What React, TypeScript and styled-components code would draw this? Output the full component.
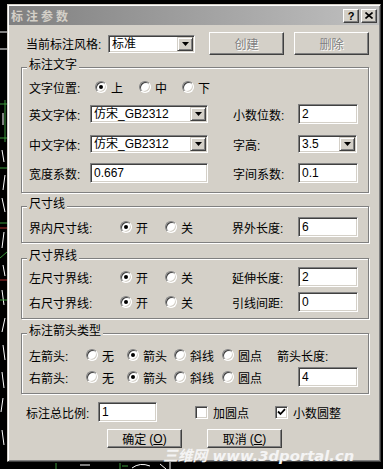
import React from "react";
import styled, { createGlobalStyle } from "styled-components";

const Global = createGlobalStyle`
  html, body { margin: 0; padding: 0; background: #000; }
  body {
    width: 383px; height: 469px; overflow: hidden;
    font-family: "Liberation Sans", "Noto Sans CJK SC", sans-serif;
    font-size: 12px; color: #000;
  }
  * { box-sizing: border-box; }
`;

const Screen = styled.div`
  position: relative;
  width: 383px;
  height: 469px;
  padding: 4px 2px 0 7px;
  background: #000;
`;

const Backdrop = styled.svg`
  position: absolute;
  left: 0; top: 0;
  width: 383px; height: 469px;
  z-index: 0;
`;

const Dialog = styled.div`
  position: relative;
  z-index: 1;
  width: 374px;
  height: 458px;
  background: #d4d0c8;
  border: 1px solid;
  border-color: #d4d0c8 #404040 #404040 #d4d0c8;
  box-shadow: inset 1px 1px #fff, inset -1px -1px #808080;
  padding: 1px;
  display: flex;
  flex-direction: column;
`;

const TitleBar = styled.div`
  height: 19px;
  display: flex;
  align-items: center;
  padding: 0 2px 0 2px;
  background: linear-gradient(to right, #808080, #c0c0c0);
`;

const TitleText = styled.span`
  flex: 1;
  font-family: "Noto Sans CJK SC", sans-serif;
  font-weight: 700;
  font-size: 12px;
  letter-spacing: 3px;
  color: #d4d0c8;
  line-height: 19px;
`;

const CaptionButton = styled.span<{ $ml: number }>`
  width: 16px;
  height: 14px;
  margin-left: ${(p) => p.$ml}px;
  background: #d4d0c8;
  border: 1px solid;
  border-color: #fff #404040 #404040 #fff;
  box-shadow: inset -1px -1px #808080;
  display: flex;
  align-items: center;
  justify-content: center;
  font-family: "Liberation Sans", sans-serif;
  font-weight: 700;
  font-size: 11px;
  line-height: 12px;
`;

const Body = styled.div`
  flex: 1;
  display: flex;
  flex-direction: column;
  padding: 0 10px 0 12px;
`;

const TopRow = styled.div`
  margin-top: 7px;
  height: 23px;
  display: flex;
  align-items: center;
  padding-left: 5px;
`;

const Label = styled.span<{ $w?: number }>`
  white-space: nowrap;
  ${(p) => (p.$w ? `width: ${p.$w}px; flex: none;` : "")}
`;

const Sunken = styled.div<{ $w?: number; $h: number }>`
  width: ${(p) => (p.$w ? `${p.$w}px` : "100%")};
  height: ${(p) => p.$h}px;
  flex: none;
  background: #fff;
  border: 1px solid;
  border-color: #808080 #fff #fff #808080;
  box-shadow: inset 1px 1px #404040, inset -1px -1px #d4d0c8;
  display: flex;
  align-items: center;
  padding: 0 2px 0 3px;
  white-space: nowrap;
  overflow: hidden;
`;

const FieldText = styled.span`
  flex: 1;
  line-height: 14px;
`;

const DropButton = styled.span`
  width: 16px;
  height: 14px;
  flex: none;
  margin-right: -1px;
  background: #d4d0c8;
  border: 1px solid;
  border-color: #d4d0c8 #404040 #404040 #d4d0c8;
  box-shadow: inset 1px 1px #fff, inset -1px -1px #808080;
  display: flex;
  align-items: center;
  justify-content: center;
`;

const Button = styled.button<{ $w: number; $h: number; $ml: number; $off?: boolean }>`
  width: ${(p) => p.$w}px;
  height: ${(p) => p.$h}px;
  margin-left: ${(p) => p.$ml}px;
  flex: none;
  padding: 0;
  background: #d4d0c8;
  border: 1px solid;
  border-color: #fff #404040 #404040 #fff;
  box-shadow: inset -1px -1px #808080;
  font-family: "Liberation Sans", "Noto Sans CJK SC", sans-serif;
  font-size: 12px;
  color: ${(p) => (p.$off ? "#808080" : "#000")};
  text-shadow: ${(p) => (p.$off ? "1px 1px #fff" : "none")};
  display: flex;
  align-items: center;
  justify-content: center;
  gap: 3px;
`;

const Group = styled.div<{ $mt: number; $pt: number; $pb: number }>`
  position: relative;
  margin-top: ${(p) => p.$mt}px;
  border: 1px solid #808080;
  box-shadow: inset 1px 1px #fff, 1px 1px #fff;
  padding: ${(p) => p.$pt}px 0 ${(p) => p.$pb}px 7px;
`;

const Legend = styled.span`
  position: absolute;
  top: -10px;
  left: 5px;
  padding: 0 2px;
  line-height: 14px;
  background: #d4d0c8;
`;

const Grid = styled.div<{ $cols: string; $rows: string; $gap?: number }>`
  display: grid;
  grid-template-columns: ${(p) => p.$cols};
  grid-template-rows: ${(p) => p.$rows};
  row-gap: ${(p) => p.$gap ?? 0}px;
  align-items: center;
`;

const Cell = styled.div<{ $col: string }>`
  grid-column: ${(p) => p.$col};
  display: flex;
  align-items: center;
`;

const OptionRow = styled.div<{ $pl: number }>`
  display: flex;
  align-items: center;
  padding-left: ${(p) => p.$pl}px;
`;

const Option = styled.label<{ $w?: number }>`
  display: flex;
  align-items: center;
  gap: 4px;
  white-space: nowrap;
  ${(p) => (p.$w ? `width: ${p.$w}px; flex: none;` : "")}
`;

const RadioMark = styled.span<{ $on?: boolean }>`
  position: relative;
  width: 12px;
  height: 12px;
  flex: none;
  border-radius: 50%;
  background: #fff;
  border: 1px solid;
  border-color: #808080 #fff #fff #808080;
  box-shadow: inset 1px 1px #404040, inset -1px -1px #d4d0c8;
  &::after {
    content: "";
    display: ${(p) => (p.$on ? "block" : "none")};
    position: absolute;
    left: 3px;
    top: 3px;
    width: 4px;
    height: 4px;
    border-radius: 50%;
    background: #000;
  }
`;

const CheckMark = styled.span`
  width: 13px;
  height: 13px;
  flex: none;
  background: #fff;
  border: 1px solid;
  border-color: #808080 #fff #fff #808080;
  box-shadow: inset 1px 1px #404040, inset -1px -1px #d4d0c8;
  display: flex;
  align-items: center;
  justify-content: center;
`;

const BottomRow = styled.div<{ $mt: number; $h: number; $pl: number }>`
  margin-top: ${(p) => p.$mt}px;
  height: ${(p) => p.$h}px;
  display: flex;
  align-items: center;
  padding-left: ${(p) => p.$pl}px;
`;

const CheckOption = styled.label<{ $w?: number; $ml?: number }>`
  display: flex;
  align-items: center;
  gap: 5px;
  white-space: nowrap;
  margin-left: ${(p) => p.$ml ?? 0}px;
  ${(p) => (p.$w ? `width: ${p.$w}px; flex: none;` : "")}
`;

const Watermark = styled.div`
  position: absolute;
  left: 163px;
  top: 449px;
  z-index: 2;
  font-family: "DejaVu Sans", "Noto Sans CJK SC", sans-serif;
  font-weight: 700;
  font-style: italic;
  font-size: 14.8px;
  line-height: 14px;
  color: #f4f4f4;
  white-space: nowrap;
`;

const Arrow = () => (
  <svg width="7" height="4" viewBox="0 0 7 4">
    <polygon points="0,0 7,0 3.5,4" fill="#000" />
  </svg>
);

const Combo = ({ value, w }: { value: string; w?: number }) => (
  <Sunken $w={w} $h={18}>
    <FieldText>{value}</FieldText>
    <DropButton>
      <Arrow />
    </DropButton>
  </Sunken>
);

const Edit = ({ value, w }: { value: string; w?: number }) => (
  <Sunken $w={w} $h={20}>
    <FieldText>{value}</FieldText>
  </Sunken>
);

const Radio = ({ label, on, w }: { label: string; on?: boolean; w?: number }) => (
  <Option $w={w}>
    <RadioMark $on={on} />
    <span>{label}</span>
  </Option>
);

const Check = ({ label, on, w, ml }: { label: string; on?: boolean; w?: number; ml?: number }) => (
  <CheckOption $w={w} $ml={ml}>
    <CheckMark>
      {on && (
        <svg width="9" height="8" viewBox="0 0 9 8">
          <path d="M1 3.5 L3.5 6 L8 1.2" stroke="#000" strokeWidth="1.8" fill="none" />
        </svg>
      )}
    </CheckMark>
    <span>{label}</span>
  </CheckOption>
);

const CAD_LINES: { d: string; c: string }[] = [
  { d: "M0 32 H7 M0 49 H7", c: "#fff" },
  { d: "M5 100 V142 M0 104 H7 M0 138 H7", c: "#3c9a3c" },
  { d: "M3 113 V125 M2 150 L4 162 M5 175 L3 190 M2 198 L5 212 M4 232 L2 248 M3 265 L5 276 M2 290 L4 305 M5 318 L2 332 M3 345 L5 360 M2 372 L4 388 M3 398 L1 412 M2 430 L4 445", c: "#fff" },
  { d: "M0 168 H7 M0 223 H7 M0 258 L7 252 M0 300 H7", c: "#3c9a3c" },
  { d: "M0 228 H7 M0 280 H7", c: "#b03030" },
  { d: "M56 463 V469 M120 463 V469 M122 466 H128", c: "#3c9a3c" },
  { d: "M80 465 H90 M132 468 Q140 462 150 466 M160 464 L166 469 M170 462 V469", c: "#fff" },
];

export default function App() {
  return (
    <>
      <Global />
      <Screen>
        <Backdrop viewBox="0 0 383 469">
          {CAD_LINES.map((l, i) => (
            <path key={i} d={l.d} stroke={l.c} strokeWidth="1" fill="none" />
          ))}
        </Backdrop>
        <Dialog>
          <TitleBar>
            <TitleText>标注参数</TitleText>
            <CaptionButton $ml={0}>?</CaptionButton>
            <CaptionButton $ml={2}>
              <svg width="8" height="7" viewBox="0 0 8 7">
                <path d="M0.5 0.5 L7.5 6.5 M7.5 0.5 L0.5 6.5" stroke="#000" strokeWidth="1.6" />
              </svg>
            </CaptionButton>
          </TitleBar>
          <Body>
            <TopRow>
              <Label $w={82}>当前标注风格:</Label>
              <Combo value="标准" w={87} />
              <Button $w={75} $h={23} $ml={14} $off>创建</Button>
              <Button $w={75} $h={23} $ml={10} $off>删除</Button>
            </TopRow>

            <Group $mt={12} $pt={5} $pb={7}>
              <Legend>标注文字</Legend>
              <Grid $cols="61px 118px 25px 65px 60px" $rows="28px 26px 34px 24px">
                <Cell $col="1">
                  <Label>文字位置:</Label>
                </Cell>
                <Cell $col="2 / 6">
                  <OptionRow $pl={5}>
                    <Radio label="上" on w={44} />
                    <Radio label="中" w={43} />
                    <Radio label="下" />
                  </OptionRow>
                </Cell>

                <Cell $col="1"><Label>英文字体:</Label></Cell>
                <Cell $col="2"><Combo value="仿宋_GB2312" /></Cell>
                <Cell $col="4"><Label>小数位数:</Label></Cell>
                <Cell $col="5"><Edit value="2" /></Cell>

                <Cell $col="1"><Label>中文字体:</Label></Cell>
                <Cell $col="2"><Combo value="仿宋_GB2312" /></Cell>
                <Cell $col="4"><Label>字高:</Label></Cell>
                <Cell $col="5"><Combo value="3.5" w={59} /></Cell>

                <Cell $col="1"><Label>宽度系数:</Label></Cell>
                <Cell $col="2"><Edit value="0.667" /></Cell>
                <Cell $col="4"><Label>字间系数:</Label></Cell>
                <Cell $col="5"><Edit value="0.1" /></Cell>
              </Grid>
            </Group>

            <Group $mt={13} $pt={10} $pb={5}>
              <Legend>尺寸线</Legend>
              <Grid $cols="91px 45px 67px 66px 60px" $rows="20px">
                <Cell $col="1"><Label>界内尺寸线:</Label></Cell>
                <Cell $col="2"><Radio label="开" on /></Cell>
                <Cell $col="3"><Radio label="关" /></Cell>
                <Cell $col="4"><Label>界外长度:</Label></Cell>
                <Cell $col="5"><Edit value="6" /></Cell>
              </Grid>
            </Group>

            <Group $mt={15} $pt={8} $pb={6}>
              <Legend>尺寸界线</Legend>
              <Grid $cols="91px 45px 67px 66px 60px" $rows="20px 20px" $gap={5}>
                <Cell $col="1"><Label>左尺寸界线:</Label></Cell>
                <Cell $col="2"><Radio label="开" on /></Cell>
                <Cell $col="3"><Radio label="关" /></Cell>
                <Cell $col="4"><Label>延伸长度:</Label></Cell>
                <Cell $col="5"><Edit value="2" /></Cell>

                <Cell $col="1"><Label>右尺寸界线:</Label></Cell>
                <Cell $col="2"><Radio label="开" on /></Cell>
                <Cell $col="3"><Radio label="关" /></Cell>
                <Cell $col="4"><Label>引线间距:</Label></Cell>
                <Cell $col="5"><Edit value="0" /></Cell>
              </Grid>
            </Group>

            <Group $mt={14} $pt={11} $pb={6}>
              <Legend>标注箭头类型</Legend>
              <Grid $cols="57px 41px 47px 48px 55px 21px 60px" $rows="20px 20px" $gap={2}>
                <Cell $col="1"><Label>左箭头:</Label></Cell>
                <Cell $col="2"><Radio label="无" /></Cell>
                <Cell $col="3"><Radio label="箭头" on /></Cell>
                <Cell $col="4"><Radio label="斜线" /></Cell>
                <Cell $col="5"><Radio label="圆点" /></Cell>
                <Cell $col="6 / 8"><Label>箭头长度:</Label></Cell>

                <Cell $col="1"><Label>右箭头:</Label></Cell>
                <Cell $col="2"><Radio label="无" /></Cell>
                <Cell $col="3"><Radio label="箭头" on /></Cell>
                <Cell $col="4"><Radio label="斜线" /></Cell>
                <Cell $col="5"><Radio label="圆点" /></Cell>
                <Cell $col="7"><Edit value="4" /></Cell>
              </Grid>
            </Group>

            <BottomRow $mt={8} $h={20} $pl={5}>
              <Label $w={72}>标注总比例:</Label>
              <Edit value="1" w={59} />
              <Check label="加圆点" w={80} ml={38} />
              <Check label="小数圆整" on />
            </BottomRow>

            <BottomRow $mt={7} $h={19} $pl={86}>
              <Button $w={75} $h={19} $ml={0}>
                确定<span>(<u>O</u>)</span>
              </Button>
              <Button $w={75} $h={19} $ml={25}>
                取消<span>(<u>C</u>)</span>
              </Button>
            </BottomRow>
          </Body>
        </Dialog>
        <Watermark>三维网 www.3dportal.cn</Watermark>
      </Screen>
    </>
  );
}
